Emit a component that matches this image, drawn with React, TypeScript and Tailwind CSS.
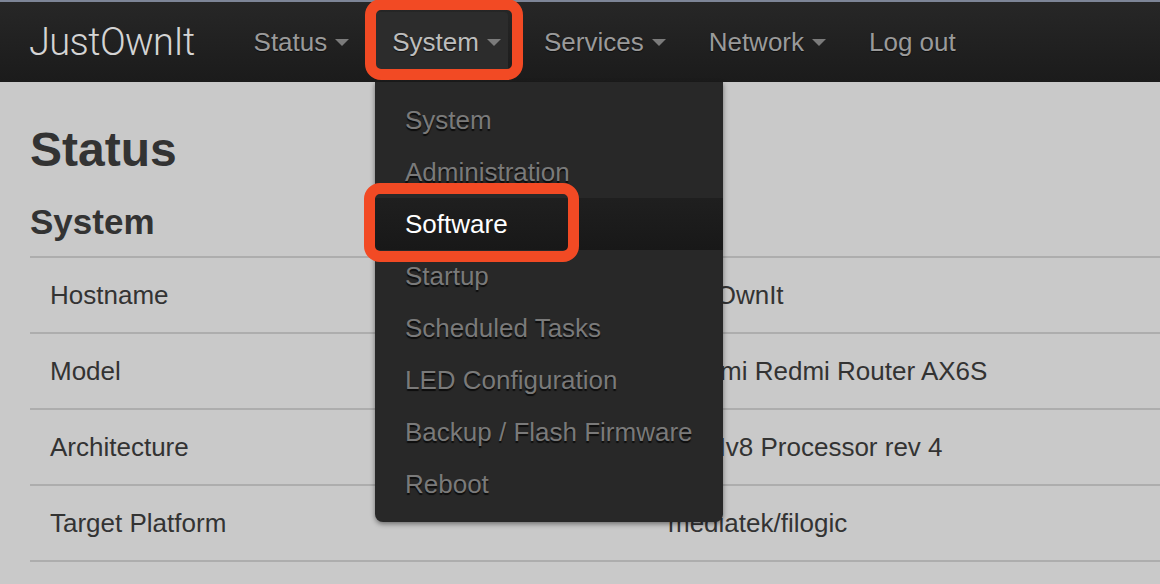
import React from "react";

interface NavItem {
  label: string;
  caret: boolean;
  active?: boolean;
}

const NAV: NavItem[] = [
  { label: "Status", caret: true },
  { label: "System", caret: true, active: true },
  { label: "Services", caret: true },
  { label: "Network", caret: true },
  { label: "Log out", caret: false },
];

const SYSTEM_MENU = [
  "System",
  "Administration",
  "Software",
  "Startup",
  "Scheduled Tasks",
  "LED Configuration",
  "Backup / Flash Firmware",
  "Reboot",
];

const ROWS: [string, string][] = [
  ["Hostname", "JustOwnIt"],
  ["Model", "Xiaomi Redmi Router AX6S"],
  ["Architecture", "ARMv8 Processor rev 4"],
  ["Target Platform", "mediatek/filogic"],
];

function Caret() {
  return (
    <span className="ml-2 inline-block h-0 w-0 border-l-[7px] border-r-[7px] border-t-[7px] border-l-transparent border-r-transparent border-t-[#7b7b7b]" />
  );
}

export default function App() {
  return (
    <div className="relative min-h-screen overflow-hidden bg-[#c9c9c9] font-['Liberation_Sans',Arial,sans-serif] text-[#333]">
      <div className="h-[2px] bg-[#7d8597]" />

      <header className="flex h-[80px] items-center bg-gradient-to-b from-[#272727] to-[#1b1b1b]">
        <a className="ml-[29px] font-['Roboto',sans-serif] text-[38px] font-light leading-none tracking-[-0.6px] text-[#d4d4d4]">
          JustOwnIt
        </a>
        <ul className="ml-[42px] flex h-full items-center gap-[19px]">
          {NAV.map((item) => (
            <li
              key={item.label}
              className={`flex h-[60px] items-center rounded-[4px] pl-[17px] pr-[7px] text-[26px] [text-shadow:0_1px_1px_rgba(0,0,0,0.6)] ${
                item.active ? "bg-[#2c2c2c] text-[#bdbdbd]" : "text-[#9a9a9a]"
              }`}
            >
              {item.label}
              {item.caret && <Caret />}
            </li>
          ))}
        </ul>
      </header>

      <main className="pl-[30px] pt-[40px]">
        <h1 className="text-[48px] font-bold leading-[56px]">Status</h1>
        <h2 className="mt-[22px] text-[35px] font-bold leading-[44px]">System</h2>
        <div className="mt-[12px] border-t-2 border-[#adadad]">
          {ROWS.map(([label, value]) => (
            <div
              key={label}
              className="grid h-[76px] grid-cols-[618px_1fr] items-center border-b-2 border-[#adadad] text-[26px]"
            >
              <div className="pl-[20px]">{label}</div>
              <div className="pl-[20px]">{value}</div>
            </div>
          ))}
        </div>
      </main>

      {/* System dropdown */}
      <div className="absolute left-[375px] top-[82px] w-[348px] rounded-b-[8px] bg-[#282828] py-[12px] shadow-[0_2px_5px_rgba(0,0,0,0.45)]">
        {SYSTEM_MENU.map((entry) => (
          <div
            key={entry}
            className={`flex h-[52px] items-center pl-[30px] text-[26px] ${
              entry === "Software"
                ? "bg-gradient-to-b from-[#1f1f1f] to-[#181818] text-white"
                : "text-[#7a7a7a] [text-shadow:0_2px_1px_rgba(0,0,0,0.7)]"
            }`}
          >
            {entry}
          </div>
        ))}
      </div>

      {/* highlight frames */}
      <div className="pointer-events-none absolute left-[365px] top-[-1px] h-[81px] w-[158px] rounded-[16px] border-[11px] border-[#f24a24]" />
      <div className="pointer-events-none absolute left-[364px] top-[183px] h-[79px] w-[215px] rounded-[16px] border-[11px] border-[#f24a24]" />
    </div>
  );
}
